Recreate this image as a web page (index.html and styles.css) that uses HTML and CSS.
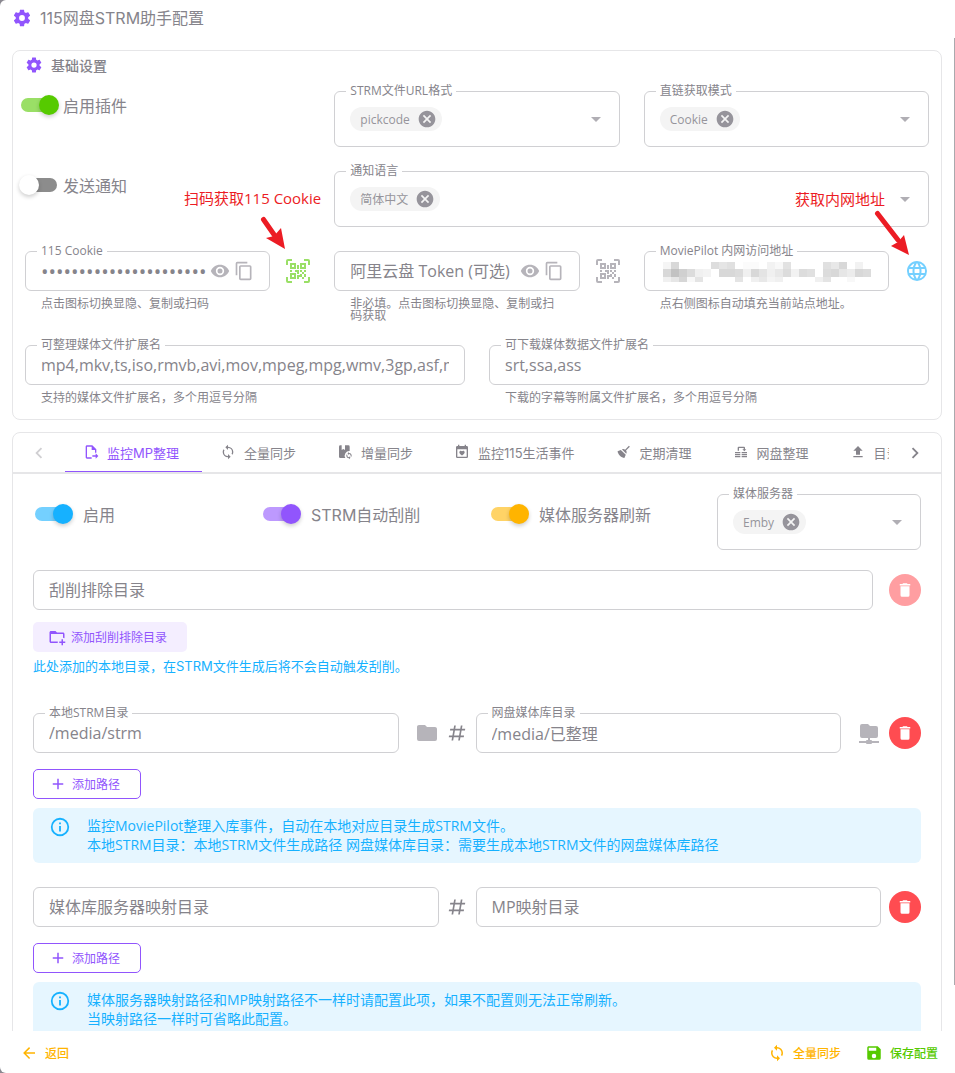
FILE: index.html
```html
<!DOCTYPE html>
<html lang="zh-CN">
<head>
    <meta charset="UTF-8">
    <meta name="viewport" content="width=device-width, initial-scale=1.0">
    <title>115网盘STRM助手配置</title>
    <link rel="stylesheet" href="styles.css">
</head>
<body>
    <!-- Icon sprite -->
    <svg class="sprite" aria-hidden="true">
        <symbol id="cog" viewBox="0 0 24 24"><path d="M12,15.5A3.5,3.5 0 0,1 8.5,12A3.5,3.5 0 0,1 12,8.5A3.5,3.5 0 0,1 15.5,12A3.5,3.5 0 0,1 12,15.5M19.43,12.97C19.47,12.65 19.5,12.33 19.5,12C19.5,11.67 19.47,11.34 19.43,11L21.54,9.37C21.73,9.22 21.78,8.95 21.66,8.73L19.66,5.27C19.54,5.05 19.27,4.96 19.05,5.05L16.56,6.05C16.04,5.66 15.5,5.32 14.87,5.07L14.5,2.42C14.46,2.18 14.25,2 14,2H10C9.75,2 9.54,2.18 9.5,2.42L9.13,5.07C8.5,5.32 7.96,5.66 7.44,6.05L4.95,5.05C4.73,4.96 4.46,5.05 4.34,5.27L2.34,8.73C2.21,8.95 2.27,9.22 2.46,9.37L4.57,11C4.53,11.34 4.5,11.67 4.5,12C4.5,12.33 4.53,12.65 4.57,12.97L2.46,14.63C2.27,14.78 2.21,15.05 2.34,15.27L4.34,18.73C4.46,18.95 4.73,19.03 4.95,18.95L7.44,17.94C7.96,18.34 8.5,18.68 9.13,18.93L9.5,21.58C9.54,21.82 9.75,22 10,22H14C14.25,22 14.46,21.82 14.5,21.58L14.87,18.93C15.5,18.67 16.04,18.34 16.56,17.94L19.05,18.95C19.27,19.03 19.54,18.95 19.66,18.73L21.66,15.27C21.78,15.05 21.73,14.78 21.54,14.63L19.43,12.97Z"/></symbol>
        <symbol id="eye" viewBox="0 0 24 24"><path d="M12,9A3,3 0 0,0 9,12A3,3 0 0,0 12,15A3,3 0 0,0 15,12A3,3 0 0,0 12,9M12,17A5,5 0 0,1 7,12A5,5 0 0,1 12,7A5,5 0 0,1 17,12A5,5 0 0,1 12,17M12,4.5C7,4.5 2.73,7.61 1,12C2.73,16.39 7,19.5 12,19.5C17,19.5 21.27,16.39 23,12C21.27,7.61 17,4.5 12,4.5Z"/></symbol>
        <symbol id="copy" viewBox="0 0 24 24"><path d="M19,21H8V7H19M19,5H8A2,2 0 0,0 6,7V21A2,2 0 0,0 8,23H19A2,2 0 0,0 21,21V7A2,2 0 0,0 19,5M16,1H4A2,2 0 0,0 2,3V17H4V3H16V1Z"/></symbol>
        <symbol id="qrcode" viewBox="0 0 24 24"><path d="M4,4H10V10H4V4M20,4V10H14V4H20M14,15H16V13H14V11H16V13H18V11H20V13H18V15H20V18H18V20H16V18H13V20H11V16H14V15M16,15V18H18V15H16M4,20V14H10V20H4M6,6V8H8V6H6M16,6V8H18V6H16M6,16V18H8V16H6M4,11H6V13H4V11M9,11H13V15H11V13H9V11M11,6H13V10H11V6M2,2V6H0V2A2,2 0 0,1 2,0H6V2H2M22,0A2,2 0 0,1 24,2V6H22V2H18V0H22M2,18V22H6V24H2A2,2 0 0,1 0,22V18H2M22,22V18H24V22A2,2 0 0,1 22,24H18V22H22Z"/></symbol>
        <symbol id="web" viewBox="0 0 24 24"><path d="M16.36,14C16.44,13.34 16.5,12.68 16.5,12C16.5,11.32 16.44,10.66 16.36,10H19.74C19.9,10.64 20,11.31 20,12C20,12.69 19.9,13.36 19.74,14M14.59,19.56C15.19,18.45 15.65,17.25 15.97,16H18.92C17.96,17.65 16.43,18.93 14.59,19.56M14.34,14H9.66C9.56,13.34 9.5,12.68 9.5,12C9.5,11.32 9.56,10.65 9.66,10H14.34C14.43,10.65 14.5,11.32 14.5,12C14.5,12.68 14.43,13.34 14.34,14M12,19.96C11.17,18.76 10.5,17.43 10.09,16H13.91C13.5,17.43 12.83,18.76 12,19.96M8,8H5.08C6.03,6.34 7.57,5.06 9.4,4.44C8.8,5.55 8.35,6.75 8,8M5.08,16H8C8.35,17.25 8.8,18.45 9.4,19.56C7.57,18.93 6.03,17.65 5.08,16M4.26,14C4.1,13.36 4,12.69 4,12C4,11.31 4.1,10.64 4.26,10H7.64C7.56,10.66 7.5,11.32 7.5,12C7.5,12.68 7.56,13.34 7.64,14M12,4.03C12.83,5.23 13.5,6.57 13.91,8H10.09C10.5,6.57 11.17,5.23 12,4.03M18.92,8H15.97C15.65,6.75 15.19,5.55 14.59,4.44C16.43,5.07 17.96,6.34 18.92,8M12,2C6.47,2 2,6.5 2,12A10,10 0 0,0 12,22A10,10 0 0,0 22,12A10,10 0 0,0 12,2Z"/></symbol>
        <symbol id="sync" viewBox="0 0 24 24"><path d="M12,18A6,6 0 0,1 6,12C6,11 6.25,10.03 6.7,9.2L5.24,7.74C4.46,8.97 4,10.43 4,12A8,8 0 0,0 12,20V23L16,19L12,15M12,4V1L8,5L12,9V6A6,6 0 0,1 18,12C18,13 17.75,13.97 17.3,14.8L18.76,16.26C19.54,15.03 20,13.57 20,12A8,8 0 0,0 12,4Z"/></symbol>
        <symbol id="trash" viewBox="0 0 24 24"><path d="M19,4H15.5L14.5,3H9.5L8.5,4H5V6H19M6,19A2,2 0 0,0 8,21H16A2,2 0 0,0 18,19V7H6V19Z"/></symbol>
        <symbol id="folder" viewBox="0 0 24 24"><path d="M10,4H4C2.89,4 2,4.89 2,6V18A2,2 0 0,0 4,20H20A2,2 0 0,0 22,18V8C22,6.89 21.1,6 20,6H12L10,4Z"/></symbol>
        <symbol id="folder-network" viewBox="0 0 24 24"><path d="M3,15V5A2,2 0 0,1 5,3H11L13,5H19A2,2 0 0,1 21,7V15A2,2 0 0,1 19,17H13V19H14A1,1 0 0,1 15,20H22V22H15A1,1 0 0,1 14,23H10A1,1 0 0,1 9,22H2V20H9A1,1 0 0,1 10,19H11V17H5A2,2 0 0,1 3,15Z"/></symbol>
        <symbol id="folder-plus" viewBox="0 0 24 24"><path d="M13 19C13 19.34 13.04 19.67 13.09 20H4C2.9 20 2 19.11 2 18V6C2 4.89 2.89 4 4 4H10L12 6H20C21.1 6 22 6.89 22 8V13.81C21.39 13.46 20.72 13.22 20 13.09V8H4V18H13.09C13.04 18.33 13 18.66 13 19M20 18V15H18V18H15V20H18V23H20V20H23V18H20Z"/></symbol>
        <symbol id="pound" viewBox="0 0 24 24"><path d="M5.41,21L6.12,17H2.12L2.47,15H6.47L7.53,9H3.53L3.88,7H7.88L8.59,3H10.59L9.88,7H15.88L16.59,3H18.59L17.88,7H21.88L21.53,9H17.53L16.47,15H20.47L20.12,17H16.12L15.41,21H13.41L14.12,17H8.12L7.41,21H5.41M9.53,9L8.47,15H14.47L15.53,9H9.53Z"/></symbol>
        <symbol id="info" viewBox="0 0 24 24"><path d="M11,9H13V7H11M12,20C7.59,20 4,16.41 4,12C4,7.59 7.59,4 12,4C16.41,4 20,7.59 20,12C20,16.41 16.41,20 12,20M12,2A10,10 0 0,0 2,12A10,10 0 0,0 12,22A10,10 0 0,0 22,12A10,10 0 0,0 12,2M11,17H13V11H11V17Z"/></symbol>
        <symbol id="save" viewBox="0 0 24 24"><path d="M15,9H5V5H15M12,19A3,3 0 0,1 9,16A3,3 0 0,1 12,13A3,3 0 0,1 15,16A3,3 0 0,1 12,19M17,3H5C3.89,3 3,3.9 3,5V19A2,2 0 0,0 5,21H19A2,2 0 0,0 21,19V7L17,3Z"/></symbol>
        <symbol id="arrow-left" viewBox="0 0 24 24"><path d="M20,11V13H8L13.5,18.5L12.08,19.92L4.16,12L12.08,4.08L13.5,5.5L8,11H20Z"/></symbol>
        <symbol id="plus" viewBox="0 0 24 24"><path d="M19,13H13V19H11V13H5V11H11V5H13V11H19V13Z"/></symbol>
        <symbol id="chevron-left" viewBox="0 0 24 24"><path d="M15.41,16.58L10.83,12L15.41,7.41L14,6L8,12L14,18L15.41,16.58Z"/></symbol>
        <symbol id="chevron-right" viewBox="0 0 24 24"><path d="M8.59,16.58L13.17,12L8.59,7.41L10,6L16,12L10,18L8.59,16.58Z"/></symbol>
        <symbol id="close" viewBox="0 0 24 24"><path d="M12,2C17.53,2 22,6.47 22,12C22,17.53 17.53,22 12,22C6.47,22 2,17.53 2,12C2,6.47 6.47,2 12,2M15.59,7L12,10.59L8.41,7L7,8.41L10.59,12L7,15.59L8.41,17L12,13.41L15.59,17L17,15.59L13.41,12L17,8.41L15.59,7Z"/></symbol>
        <symbol id="menu-down" viewBox="0 0 24 24"><path d="M7,10L12,15L17,10H7Z"/></symbol>
        <symbol id="file-move" viewBox="0 0 24 24"><path d="M14,2H6C4.9,2 4,2.9 4,4V20C4,21.1 4.9,22 6,22H13V20H6V4H13V9H18V13H20V8L14,2M23,18L19,14V17H14V19H19V22L23,18Z"/></symbol>
        <symbol id="book-sync" viewBox="0 0 24 24"><path d="M5,2H7V9L9.5,7.5L12,9V2H17A2,2 0 0,1 19,4V10.5A7,7 0 0,0 12.5,21H5A2,2 0 0,1 3,19V4A2,2 0 0,1 5,2M18,12V13.5A4,4 0 0,1 21.4,19.6L20.3,18.5A2.5,2.5 0 0,0 18,15V16.5L15.7,14.2L18,12M18,23V21.5A4,4 0 0,1 14.6,15.4L15.7,16.5A2.5,2.5 0 0,0 18,20V18.5L20.3,20.8L18,23Z"/></symbol>
        <symbol id="calendar-heart" viewBox="0 0 24 24"><path d="M19,19H5V8H19M16,1V3H8V1H6V3H5C3.89,3 3,3.89 3,5V19A2,2 0 0,0 5,21H19A2,2 0 0,0 21,19V5A2,2 0 0,0 19,3H18V1M12,17.42L11.42,16.9C9.36,15.03 8,13.8 8,12.3C8,11.06 8.97,10.1 10.2,10.1C10.89,10.1 11.56,10.42 12,10.93C12.44,10.42 13.11,10.1 13.8,10.1C15.03,10.1 16,11.06 16,12.3C16,13.8 14.64,15.03 12.58,16.9L12,17.42Z"/></symbol>
        <symbol id="broom" viewBox="0 0 24 24"><path d="M19.36,2.72L20.78,4.14L15.06,9.85C16.13,11.39 16.28,13.24 15.38,14.44L9.06,8.12C10.26,7.22 12.11,7.37 13.65,8.44L19.36,2.72M5.93,17.57C3.92,15.56 2.69,13.16 2.35,10.92L7.23,8.83L14.67,16.27L12.58,21.15C10.34,20.81 7.94,19.58 5.93,17.57Z"/></symbol>
        <symbol id="transfer" viewBox="0 0 24 24"><path d="M7,10V5.5A1.5,1.5 0 0,1 8.5,4H16.5A1.5,1.5 0 0,1 18,5.5V8H20L17,11L14,8H16V6H9V10H7M3,12H11V14H3V12M3,15H11V17H3V15M3,18H11V20H3V18M13,12H21V14H13V12M13,15H21V17H13V15M13,18H21V20H13V18Z"/></symbol>
        <symbol id="upload" viewBox="0 0 24 24"><path d="M9,16V10H5L12,3L19,10H15V16H9M5,20V18H19V20H5Z"/></symbol>
    </svg>

    <div class="dialog">
        <header class="dialog-header">
            <svg class="icon icon-md primary"><use href="#cog"/></svg>
            <h1>115网盘STRM助手配置</h1>
        </header>

        <main class="dialog-body">
            <!-- Basic settings -->
            <section class="card basic">
                <h2 class="card-title">
                    <svg class="icon icon-sm primary"><use href="#cog"/></svg>
                    基础设置
                </h2>

                <div class="grid-3">
                    <label class="switch compact">
                        <input type="checkbox" class="green" checked>
                        启用插件
                    </label>
                    <div class="field tall">
                        <label for="url-format">STRM文件URL格式</label>
                        <select id="url-format"><option>pickcode</option></select>
                        <span class="chip">pickcode<button type="button" aria-label="移除"><svg class="icon icon-md"><use href="#close"/></svg></button></span>
                        <svg class="icon icon-lg caret"><use href="#menu-down"/></svg>
                    </div>
                    <div class="field tall">
                        <label for="link-mode">直链获取模式</label>
                        <select id="link-mode"><option>Cookie</option></select>
                        <span class="chip">Cookie<button type="button" aria-label="移除"><svg class="icon icon-md"><use href="#close"/></svg></button></span>
                        <svg class="icon icon-lg caret"><use href="#menu-down"/></svg>
                    </div>

                    <label class="switch compact">
                        <input type="checkbox">
                        发送通知
                    </label>
                    <div class="field tall span-2">
                        <label for="notify-lang">通知语言</label>
                        <select id="notify-lang"><option>简体中文</option></select>
                        <span class="chip">简体中文<button type="button" aria-label="移除"><svg class="icon icon-md"><use href="#close"/></svg></button></span>
                        <svg class="icon icon-lg caret"><use href="#menu-down"/></svg>
                    </div>

                    <div class="with-append">
                        <div class="field-group">
                            <div class="field">
                                <label for="cookie">115 Cookie</label>
                                <input id="cookie" type="password" value="UID=123456789_A1_1700000000;CID">
                                <button type="button" aria-label="显示"><svg class="icon icon-md"><use href="#eye"/></svg></button>
                                <button type="button" aria-label="复制"><svg class="icon icon-md"><use href="#copy"/></svg></button>
                            </div>
                            <p class="hint">点击图标切换显隐、复制或扫码</p>
                        </div>
                        <button type="button" class="append green-light" aria-label="扫码"><svg class="icon icon-lg"><use href="#qrcode"/></svg></button>
                        <div class="note note-cookie">
                            <span>扫码获取115 Cookie</span>
                            <svg width="26" height="34" viewBox="0 0 26 34"><path d="M3.5 3.5L15 20" stroke="#ec1c24" stroke-width="5" stroke-linecap="round"/><path d="M25 33L6 22L14 20L21 12Z" fill="#ec1c24"/></svg>
                        </div>
                    </div>
                    <div class="with-append">
                        <div class="field-group">
                            <div class="field">
                                <input type="text" placeholder="阿里云盘 Token (可选)" aria-label="阿里云盘 Token (可选)">
                                <button type="button" aria-label="显示"><svg class="icon icon-md"><use href="#eye"/></svg></button>
                                <button type="button" aria-label="复制"><svg class="icon icon-md"><use href="#copy"/></svg></button>
                            </div>
                            <p class="hint">非必填。点击图标切换显隐、复制或扫码获取</p>
                        </div>
                        <button type="button" class="append muted" aria-label="扫码"><svg class="icon icon-lg"><use href="#qrcode"/></svg></button>
                    </div>
                    <div class="with-append">
                        <div class="field-group">
                            <div class="field">
                                <label for="mp-address">MoviePilot 内网访问地址</label>
                                <input id="mp-address" type="text">
                                <svg id="mosaic" class="mosaic" viewBox="0 0 208 20"></svg>
                            </div>
                            <p class="hint">点右侧图标自动填充当前站点地址。</p>
                        </div>
                        <button type="button" class="append blue-light" aria-label="填充地址"><svg class="icon icon-lg"><use href="#web"/></svg></button>
                        <div class="note note-address">
                            <span>获取内网地址</span>
                            <svg width="37" height="46" viewBox="0 0 37 46"><path d="M3.5 3.5L24 30" stroke="#ec1c24" stroke-width="5" stroke-linecap="round"/><path d="M35 45L17 36L24 32L30 25Z" fill="#ec1c24"/></svg>
                        </div>
                    </div>
                </div>

                <div class="grid-2">
                    <div class="field-group">
                        <div class="field">
                            <label for="media-ext">可整理媒体文件扩展名</label>
                            <input id="media-ext" type="text" value="mp4,mkv,ts,iso,rmvb,avi,mov,mpeg,mpg,wmv,3gp,asf,m4v,flv">
                        </div>
                        <p class="hint">支持的媒体文件扩展名，多个用逗号分隔</p>
                    </div>
                    <div class="field-group">
                        <div class="field">
                            <label for="data-ext">可下载媒体数据文件扩展名</label>
                            <input id="data-ext" type="text" value="srt,ssa,ass">
                        </div>
                        <p class="hint">下载的字幕等附属文件扩展名，多个用逗号分隔</p>
                    </div>
                </div>
            </section>

            <!-- Tabs -->
            <section class="card">
                <div class="tab-bar">
                    <button type="button" class="tab-arrow disabled" aria-label="上一页"><svg class="icon"><use href="#chevron-left"/></svg></button>
                    <div class="tabs" role="tablist">
                        <button type="button" role="tab" class="tab active"><svg class="icon icon-xs"><use href="#file-move"/></svg>监控MP整理</button>
                        <button type="button" role="tab" class="tab"><svg class="icon icon-xs"><use href="#sync"/></svg>全量同步</button>
                        <button type="button" role="tab" class="tab"><svg class="icon icon-xs"><use href="#book-sync"/></svg>增量同步</button>
                        <button type="button" role="tab" class="tab"><svg class="icon icon-xs"><use href="#calendar-heart"/></svg>监控115生活事件</button>
                        <button type="button" role="tab" class="tab"><svg class="icon icon-xs"><use href="#broom"/></svg>定期清理</button>
                        <button type="button" role="tab" class="tab"><svg class="icon icon-xs"><use href="#transfer"/></svg>网盘整理</button>
                        <button type="button" role="tab" class="tab"><svg class="icon icon-xs"><use href="#upload"/></svg>目录上传</button>
                    </div>
                    <button type="button" class="tab-arrow" aria-label="下一页"><svg class="icon"><use href="#chevron-right"/></svg></button>
                </div>

                <div class="panel">
                    <div class="grid-4">
                        <label class="switch"><input type="checkbox" class="blue" checked>启用</label>
                        <label class="switch"><input type="checkbox" class="purple" checked>STRM自动刮削</label>
                        <label class="switch"><input type="checkbox" class="orange" checked>媒体服务器刷新</label>
                        <div class="field tall">
                            <label for="media-server">媒体服务器</label>
                            <select id="media-server"><option>Emby</option></select>
                            <span class="chip">Emby<button type="button" aria-label="移除"><svg class="icon icon-md"><use href="#close"/></svg></button></span>
                            <svg class="icon icon-lg caret"><use href="#menu-down"/></svg>
                        </div>
                    </div>

                    <div class="exclude-row">
                        <div class="field"><input type="text" placeholder="刮削排除目录" aria-label="刮削排除目录"></div>
                        <button type="button" class="delete" disabled aria-label="删除"><svg class="icon icon-sm"><use href="#trash"/></svg></button>
                    </div>
                    <button type="button" class="btn tonal"><svg class="icon icon-sm"><use href="#folder-plus"/></svg>添加刮削排除目录</button>
                    <p class="tip">此处添加的本地目录，在STRM文件生成后将不会自动触发刮削。</p>

                    <div class="path-row">
                        <div class="path-cell">
                            <div class="field">
                                <label for="local-strm">本地STRM目录</label>
                                <input id="local-strm" type="text" value="/media/strm">
                            </div>
                            <button type="button" class="browse" aria-label="选择目录"><svg class="icon icon-lg"><use href="#folder"/></svg></button>
                        </div>
                        <svg class="icon icon-md pound"><use href="#pound"/></svg>
                        <div class="path-cell">
                            <div class="field">
                                <label for="pan-media">网盘媒体库目录</label>
                                <input id="pan-media" type="text" value="/media/已整理">
                            </div>
                            <button type="button" class="browse" aria-label="选择网盘目录"><svg class="icon icon-lg"><use href="#folder-network"/></svg></button>
                        </div>
                        <button type="button" class="delete" aria-label="删除"><svg class="icon icon-sm"><use href="#trash"/></svg></button>
                    </div>
                    <button type="button" class="btn outlined"><svg class="icon icon-sm"><use href="#plus"/></svg>添加路径</button>
                    <div class="alert">
                        <svg class="icon"><use href="#info"/></svg>
                        <p>监控MoviePilot整理入库事件，自动在本地对应目录生成STRM文件。<br>本地STRM目录：本地STRM文件生成路径 网盘媒体库目录：需要生成本地STRM文件的网盘媒体库路径</p>
                    </div>

                    <div class="path-row mapping">
                        <div class="field"><input type="text" placeholder="媒体库服务器映射目录" aria-label="媒体库服务器映射目录"></div>
                        <svg class="icon icon-md pound"><use href="#pound"/></svg>
                        <div class="field"><input type="text" placeholder="MP映射目录" aria-label="MP映射目录"></div>
                        <button type="button" class="delete" aria-label="删除"><svg class="icon icon-sm"><use href="#trash"/></svg></button>
                    </div>
                    <button type="button" class="btn outlined"><svg class="icon icon-sm"><use href="#plus"/></svg>添加路径</button>
                    <div class="alert">
                        <svg class="icon"><use href="#info"/></svg>
                        <p>媒体服务器映射路径和MP映射路径不一样时请配置此项，如果不配置则无法正常刷新。<br>当映射路径一样时可省略此配置。</p>
                    </div>
                </div>
            </section>
        </main>

        <footer class="dialog-footer">
            <button type="button" class="action warning"><svg class="icon icon-sm"><use href="#arrow-left"/></svg>返回</button>
            <span class="spacer"></span>
            <button type="button" class="action warning"><svg class="icon icon-sm"><use href="#sync"/></svg>全量同步</button>
            <button type="button" class="action success"><svg class="icon icon-sm"><use href="#save"/></svg>保存配置</button>
        </footer>
        <div class="scroll-thumb"></div>
    </div>

    <script>
        // Pixelated address: one grey value per 8px block, "ff" is empty
        const rows = [
            { y: 0, h: 7, v: "f5 d8 ff ff ff ff dd e5 e0 ff fb fb ff f2 f8 e2 ff ff ff ff e0 e8 d8 ff f2 ff" },
            { y: 7, h: 8, v: "d8 c2 d0 dc f0 f3 ff d8 d8 dc f0 d8 e4 f0 e8 dc f2 dc e0 ff dc d8 e6 ec d8 dc" },
            { y: 15, h: 5, v: "f0 e6 d6 f8 e4 ff ff ff ff e4 ff f0 e8 f4 f0 ff ff ff ff f0 e4 ff ff f8 ff ff" }
        ];
        let blocks = "";
        rows.forEach(row => {
            row.v.split(" ").forEach((c, i) => {
                blocks += `<rect x="${i * 8}" y="${row.y}" width="8" height="${row.h}" fill="#${c}${c}${c}"/>`;
            });
        });
        document.getElementById("mosaic").innerHTML = blocks;
    </script>
</body>
</html>
```
FILE: styles.css
```css
* {
    box-sizing: border-box;
}

body {
    margin: 0;
    background: #8a8890;
    color: #86848b;
    font-family: "Open Sans", "Noto Sans CJK SC", sans-serif;
    font-size: 16px;
}

h1, h2, p {
    margin: 0;
}

button {
    display: inline-flex;
    align-items: center;
    margin: 0;
    padding: 0;
    border: none;
    background: none;
    color: inherit;
    font-family: inherit;
    cursor: pointer;
}

.sprite {
    position: absolute;
    width: 0;
    height: 0;
}

.icon {
    width: 22px;
    height: 22px;
    flex: none;
    fill: currentColor;
}

.icon-xs { width: 16px; height: 16px; }
.icon-sm { width: 18px; height: 18px; }
.icon-md { width: 20px; height: 20px; }
.icon-lg { width: 24px; height: 24px; }

.primary { color: #9155fd; }

.dialog {
    position: relative;
    display: flex;
    flex-direction: column;
    height: 100vh;
    background: #fff;
    border-radius: 6px 0 0 6px;
    overflow: hidden;
}

.dialog-header {
    display: flex;
    align-items: center;
    gap: 8px;
    height: 38px;
    flex: none;
    padding: 0 12px 2px;
}

.dialog-header h1 {
    font: 400 16px/24px Inter, "Noto Sans CJK SC", sans-serif;
}

.dialog-body {
    flex: 1;
    min-height: 0;
    padding: 12px 13px 12px 12px;
    overflow-y: auto;
    scrollbar-width: none;
}

.scroll-thumb {
    position: absolute;
    top: 38px;
    right: 0;
    bottom: 88px;
    width: 1px;
    background: #aaa9ad;
}

.card {
    border: 1px solid #e6e6e8;
    border-radius: 8px;
    margin-bottom: 12px;
}

.basic {
    padding: 0 12px 12px;
}

.card-title {
    display: flex;
    align-items: center;
    gap: 8px;
    height: 28px;
    margin-bottom: 12px;
    font-size: 14px;
    font-weight: 500;
}

/* Grids */
.grid-2, .grid-3, .grid-4 {
    display: grid;
    gap: 24px;
}

.grid-2 { grid-template-columns: repeat(2, minmax(0, 1fr)); margin-top: 23px; }
.grid-3 { grid-template-columns: repeat(3, minmax(0, 1fr)); }
.grid-4 { grid-template-columns: repeat(4, minmax(0, 1fr)); }
.span-2 { grid-column: span 2; }

/* Switch */
.switch {
    display: flex;
    align-items: center;
    align-self: start;
    gap: 12px;
    height: 40px;
    padding-left: 2px;
    font-family: Inter, "Noto Sans CJK SC", sans-serif;
    white-space: nowrap;
}

.switch.compact {
    gap: 6px;
    height: 28px;
    padding: 0;
    margin-left: -4px;
}

.switch input {
    appearance: none;
    position: relative;
    width: 36px;
    height: 14px;
    flex: none;
    margin: 0;
    border-radius: 7px;
    background: #8c8c8c;
}

.switch input::before {
    content: "";
    position: absolute;
    top: -3px;
    left: -2px;
    width: 20px;
    height: 20px;
    border-radius: 50%;
    background: #fff;
    box-shadow: 0 2px 4px rgba(0, 0, 0, 0.2);
}

.switch input:checked::before {
    left: 18px;
}

.switch .green { background: #9adf66; }
.switch .green::before { background: #56ca00; }
.switch .blue { background: #74d0ff; }
.switch .blue::before { background: #16b1ff; }
.switch .purple { background: #bd99fe; }
.switch .purple::before { background: #9155fd; }
.switch .orange { background: #ffd366; }
.switch .orange::before { background: #ffb400; }

/* Outlined field */
.field {
    position: relative;
    display: flex;
    align-items: center;
    flex: 1;
    min-width: 0;
    height: 40px;
    padding: 0 15px;
    border: 1px solid #d0d0d3;
    border-radius: 6px;
}

.field.tall {
    height: 56px;
}

.field > label {
    position: absolute;
    top: -9px;
    left: 11px;
    z-index: 1;
    padding: 0 4px;
    background: #fff;
    font-size: 12px;
    line-height: 16px;
    white-space: nowrap;
}

.field input {
    flex: 1;
    width: 0;
    min-width: 0;
    height: 38px;
    padding: 0;
    border: none;
    outline: none;
    background: none;
    color: inherit;
    font: inherit;
}

.field input[type="password"] {
    font-size: 20px;
}

.field input::placeholder {
    color: #86848b;
    opacity: 1;
}

.field > button {
    margin-left: 4px;
    color: #b6b4ba;
}

.field select {
    position: absolute;
    inset: 0;
    width: 100%;
    appearance: none;
    border: none;
    outline: none;
    background: none;
    color: transparent;
}

.chip {
    position: relative;
    display: flex;
    align-items: center;
    gap: 7px;
    height: 24px;
    padding: 0 5px 0 10px;
    border-radius: 12px;
    background: #f4f4f4;
    color: #96949b;
    font-size: 12px;
}

.caret {
    margin-left: auto;
    margin-right: -4px;
    color: #b0aeb4;
    pointer-events: none;
}

.field-group {
    flex: 1;
    min-width: 0;
}

.hint {
    min-height: 22px;
    padding: 7px 16px 0;
    font-size: 12px;
    line-height: 12px;
}

.with-append {
    position: relative;
    display: flex;
    align-items: flex-start;
    gap: 16px;
}

.append {
    height: 40px;
}

.green-light { color: #9adf66; }
.blue-light { color: #74d0ff; }
.muted { color: #b6b4ba; }

.mosaic {
    position: absolute;
    left: 18px;
    top: 10px;
    width: 208px;
    height: 20px;
}

/* Red callouts over the form */
.note {
    position: absolute;
    display: flex;
    flex-direction: column;
    color: #ec1c24;
    font-size: 15px;
    line-height: 22px;
    white-space: nowrap;
    pointer-events: none;
}

.note svg {
    fill: none;
}

.note-cookie {
    top: -64px;
    left: 159px;
}

.note-cookie svg {
    margin: 7px 0 0 76px;
}

.note-address {
    top: -63px;
    right: 18px;
    padding-left: 0;
}

.note-address span {
    padding-right: 26px;
}

.note-address svg {
    align-self: flex-end;
}

/* Tabs */
.tab-bar {
    display: flex;
    height: 41px;
    border-bottom: 2px solid #e6e6e8;
}

.tab-arrow {
    flex: none;
    justify-content: center;
    width: 52px;
}

.tab-arrow.disabled {
    color: #d0cfd2;
}

.tabs {
    display: flex;
    flex: 1;
    min-width: 0;
    overflow: hidden;
}

.tab {
    flex: none;
    gap: 8px;
    padding: 0 23px 0 18px;
    border-bottom: 1px solid transparent;
    font-family: Inter, "Noto Sans CJK SC", sans-serif;
    font-size: 13px;
    white-space: nowrap;
}

.tab.active {
    border-color: #9155fd;
    color: #9155fd;
}

.panel {
    padding: 20px;
}

/* Path rows */
.exclude-row {
    display: flex;
    align-items: center;
    gap: 16px;
    margin: 20px 0 12px;
}

.path-row {
    display: grid;
    grid-template-columns: minmax(0, 1fr) 37px minmax(0, 1fr) 40px;
    align-items: center;
    margin: 37px 0 16px;
}

.path-row.mapping {
    margin-top: 24px;
}

.path-cell {
    display: flex;
    align-items: center;
    gap: 16px;
}

.browse {
    color: #b6b4ba;
}

.pound {
    justify-self: center;
}

.delete {
    justify-content: center;
    justify-self: end;
    flex: none;
    width: 32px;
    height: 32px;
    border-radius: 50%;
    background: #ff4c51;
    color: #fff;
}

.delete:disabled {
    background: #ff9ea1;
}

.btn {
    gap: 5px;
    height: 30px;
    padding: 0 20px 0 15px;
    border-radius: 5px;
    color: #9155fd;
    font-size: 12px;
}

.btn.tonal {
    background: #f4eeff;
}

.btn.outlined {
    border: 1px solid #9155fd;
}

.tip {
    margin-top: 4px;
    color: #16b1ff;
    font: 400 13px/20px Inter, "Noto Sans CJK SC", sans-serif;
}

.alert {
    display: flex;
    gap: 16px;
    margin-top: 9px;
    padding: 8px 16px 9px;
    border-radius: 6px;
    background: #e6f6ff;
    color: #16b1ff;
    font-size: 14px;
    line-height: 19px;
}

/* Footer */
.dialog-footer {
    display: flex;
    align-items: center;
    gap: 24px;
    height: 42px;
    flex: none;
    padding: 2px 17px 0 20px;
}

.spacer {
    flex: 1;
}

.action {
    gap: 7px;
    font-size: 12px;
    font-weight: 500;
}

.warning { color: #ffb400; }
.success { color: #56ca00; }
```
